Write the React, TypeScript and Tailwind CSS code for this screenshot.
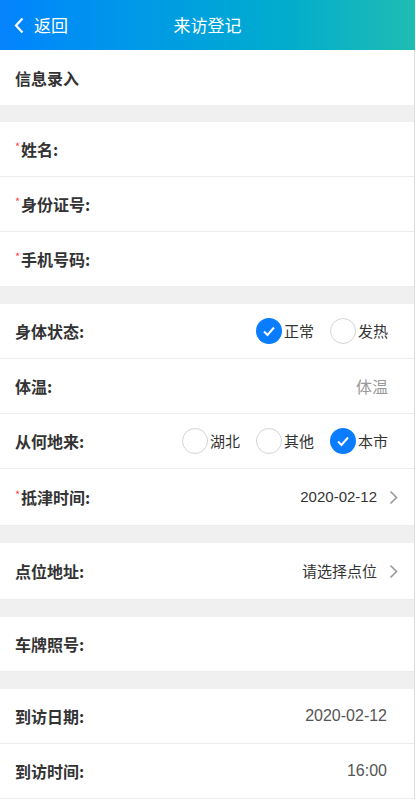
const font = { fontFamily: '"Noto Sans CJK SC", "Noto Sans", sans-serif' };
const latin = { fontFamily: '"Liberation Sans", "Noto Sans CJK SC", sans-serif' };

function Chevron({ className }: { className?: string }) {
  return (
    <svg width="9" height="15" viewBox="0 0 9 15" className={className}>
      <polyline points="1.5,1.5 7.5,7.5 1.5,13.5" fill="none" stroke="currentColor" strokeWidth="1.6" />
    </svg>
  );
}

function Radio({ label, checked }: { label: string; checked?: boolean }) {
  return (
    <div className="flex items-center">
      {checked ? (
        <span className="flex h-[26px] w-[26px] items-center justify-center rounded-full bg-[#0a7cff]">
          <svg width="14" height="14" viewBox="0 0 14 14">
            <polyline points="2,7.5 5.5,11 12,3.5" fill="none" stroke="white" strokeWidth="2" />
          </svg>
        </span>
      ) : (
        <span className="h-[26px] w-[26px] rounded-full border border-[#d4d4d4] bg-white" />
      )}
      <span className="ml-[2px] text-[15px] text-[#333]">{label}</span>
    </div>
  );
}

function Label({ text, required }: { text: string; required?: boolean }) {
  return (
    <div className="flex items-start text-[16px] font-bold text-[#333]">
      {required && <span className="mt-[1px] w-[6px] text-[11px] font-normal leading-[16px] text-[#f44]">*</span>}
      <span>{text}</span>
    </div>
  );
}

function Row({ children, tall }: { children: React.ReactNode; tall?: boolean }) {
  return (
    <div className={`flex items-center justify-between border-b border-[#eee] bg-white pl-[15px] pr-[16px] ${tall ? 'h-[57px]' : 'h-[55px]'}`}>
      {children}
    </div>
  );
}

function Gap() {
  return <div className="h-[17px] bg-[#f0f0f0]" />;
}

export default function App() {
  return (
    <div className="w-[416px] min-h-[800px] bg-white" style={font}>
      <div className="flex h-[50px] w-[415px] items-center bg-gradient-to-r from-[#0683fe] to-[#1ebcb3] text-white">
        <div className="flex w-[100px] items-center pl-[14px]">
          <svg width="10" height="17" viewBox="0 0 10 17">
            <polyline points="8.5,1.5 2,8.5 8.5,15.5" fill="none" stroke="white" strokeWidth="2.2" />
          </svg>
          <span className="ml-[10px] text-[17px]">返回</span>
        </div>
        <div className="flex-1 pr-[100px] text-center text-[17px]">来访登记</div>
      </div>

      <div className="w-[415px] border-r border-[#ddd]">
        <div className="flex h-[55px] items-center bg-white pl-[15px]">
          <span className="text-[16px] font-bold text-[#333]">信息录入</span>
        </div>
        <Gap />
        <Row><Label text="姓名:" required /></Row>
        <Row><Label text="身份证号:" required /></Row>
        <Row><Label text="手机号码:" required /></Row>
        <Gap />
        <Row>
          <Label text="身体状态:" />
          <div className="mr-[10px] flex gap-[16px]">
            <Radio label="正常" checked />
            <Radio label="发热" />
          </div>
        </Row>
        <Row>
          <Label text="体温:" />
          <span className="mr-[10px] text-[16px] text-[#999]">体温</span>
        </Row>
        <Row>
          <Label text="从何地来:" />
          <div className="mr-[10px] flex gap-[16px]">
            <Radio label="湖北" />
            <Radio label="其他" />
            <Radio label="本市" checked />
          </div>
        </Row>
        <Row tall>
          <Label text="抵津时间:" required />
          <div className="flex items-center text-[#333]">
            <span className="text-[15px]" style={latin}>2020-02-12</span>
            <Chevron className="ml-[12px] text-[#999]" />
          </div>
        </Row>
        <Gap />
        <Row tall>
          <Label text="点位地址:" />
          <div className="flex items-center text-[#333]">
            <span className="text-[15px]">请选择点位</span>
            <Chevron className="ml-[12px] text-[#999]" />
          </div>
        </Row>
        <Gap />
        <Row><Label text="车牌照号:" /></Row>
        <Gap />
        <Row>
          <Label text="到访日期:" />
          <span className="mr-[11px] text-[16px] text-[#555]" style={latin}>2020-02-12</span>
        </Row>
        <Row>
          <Label text="到访时间:" />
          <span className="mr-[11px] text-[16px] text-[#555]" style={latin}>16:00</span>
        </Row>
      </div>
    </div>
  );
}
